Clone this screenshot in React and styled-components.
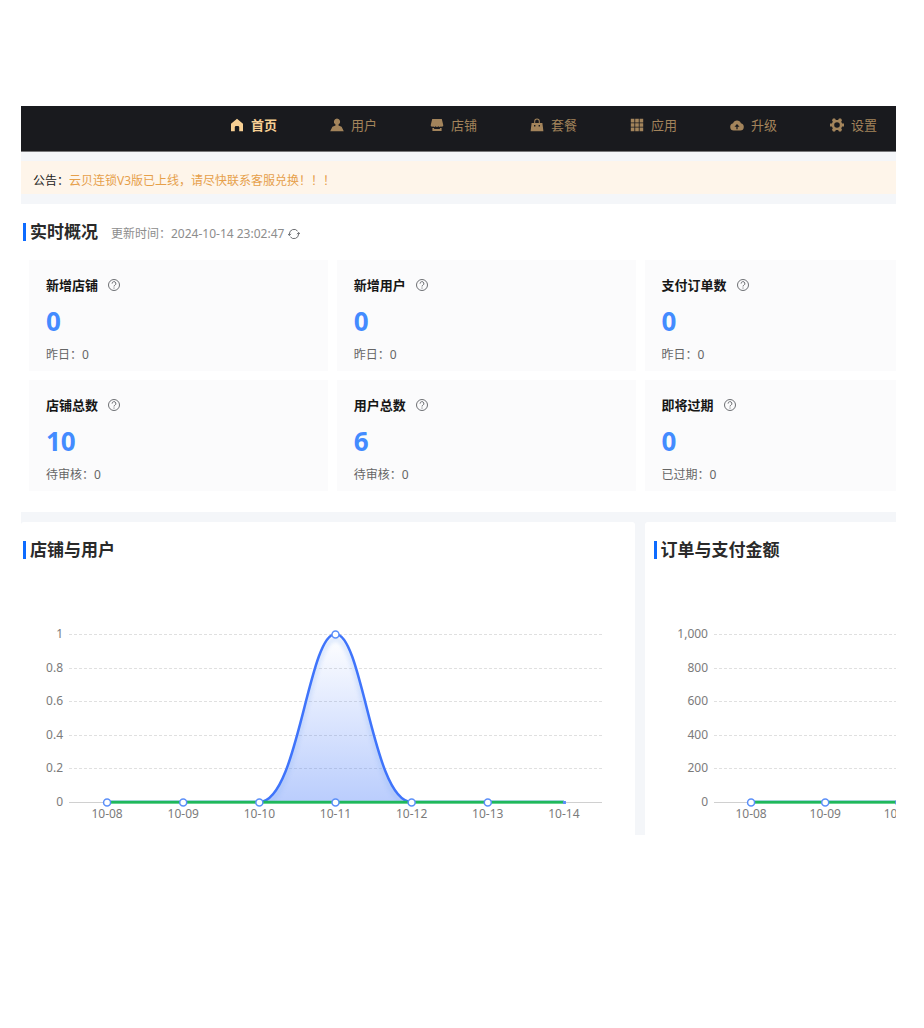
import React, { useId, useLayoutEffect, useRef, useState } from "react";
import styled, { createGlobalStyle } from "styled-components";

const GlobalStyle = createGlobalStyle`
  *, *::before, *::after { box-sizing: border-box; }
  body {
    margin: 0;
    background: #fff;
    color: #222;
    font: 12px/20px "Noto Sans", "Noto Sans CJK SC", sans-serif;
  }
`;

const Frame = styled.div`
  margin: 106px 28px 0 21px;
  overflow: hidden;
  background: #f4f6f9;
`;

const Nav = styled.nav`
  display: flex;
  height: 46px;
  padding: 9px 0 0 209px;
  background: #191a1e;
  border-bottom: 1px solid #77787b;
`;

const NavLink = styled.a`
  flex: 0 0 100px;
  display: flex;
  align-items: center;
  gap: 7px;
  height: 20px;
  font-size: 13px;
  text-decoration: none;
  white-space: nowrap;
  color: ${(p) => (p.$active ? "#f7cf93" : "#a3845b")};
  font-weight: ${(p) => (p.$active ? 700 : 400)};
`;

const NavIcon = styled.svg`
  flex: none;
  width: 14px;
  height: 14px;
  fill: currentColor;
`;

const Notice = styled.div`
  display: flex;
  align-items: center;
  height: 33px;
  margin: 9px 0 10px;
  padding: 7px 12px 0;
  background: #fef5ea;
  white-space: nowrap;
`;

const NoticeLink = styled.a`
  color: #e6a04a;
  text-decoration: none;
`;

const Overview = styled.section`
  height: 308px;
  padding: 18px 0 0 2px;
  background: #fff;
`;

const TitleRow = styled.div`
  display: flex;
  align-items: center;
  gap: 13px;
  height: 20px;
`;

const Title = styled.h2`
  display: flex;
  align-items: center;
  gap: 4px;
  margin: 0;
  font-size: 17px;
  line-height: 20px;
  color: #2a2a2a;
  white-space: nowrap;

  &::before {
    content: "";
    width: 3px;
    height: 18px;
    background: #0d6bff;
  }
`;

const Updated = styled.div`
  display: flex;
  align-items: center;
  gap: 4px;
  padding-top: 4px;
  color: #8d8d8d;
  white-space: nowrap;
`;

const IconButton = styled.button`
  display: flex;
  padding: 0;
  border: 0;
  background: none;
  color: #6d6f73;
  cursor: pointer;

  svg {
    width: ${(p) => p.$size}px;
    height: ${(p) => p.$size}px;
    fill: none;
    stroke: currentColor;
  }
`;

const Cards = styled.div`
  display: grid;
  grid-template-columns: repeat(3, calc(34% + 4px));
  gap: 9px;
  margin: 18px 0 0 6px;
`;

const Card = styled.article`
  height: 111px;
  padding: 15px 17px;
  background: #fbfbfc;
`;

const CardHead = styled.div`
  display: flex;
  align-items: center;
  gap: 10px;
`;

const CardTitle = styled.h3`
  margin: 0;
  font-size: 13px;
  line-height: 20px;
  font-weight: 600;
  color: #161616;
`;

const Value = styled.div`
  margin: 9px 0 8px;
  font-size: 26px;
  line-height: 34px;
  font-weight: 700;
  color: #438bff;
`;

const Sub = styled.div`
  line-height: 18px;
  color: #666;
`;

const Charts = styled.div`
  display: grid;
  grid-template-columns: calc(70% + 1px) 71%;
  gap: 10px;
  margin-top: 10px;
`;

const Panel = styled.section`
  height: 313px;
  padding-top: 18px;
  background: #fff;
  border-radius: 3px 3px 0 0;

  h2 { padding-left: ${(p) => p.$inset}px; }
`;

const Plot = styled.div`
  height: 255px;
  margin-top: 20px;

  svg { display: block; overflow: hidden; }
  text { font-size: 12px; fill: #7b7b7b; }
`;

const GLYPHS = {
  home: <path d="M7 .8 1 5.800v7.400h3.800V9.300A1.300 1.300 0 0 1 6.100 8h1.800a1.300 1.300 0 0 1 1.300 1.300v3.900H13V5.800z" />,
  user: <path d="M7 .6a3.200 3.200 0 0 1 1.500 6v.9l3.100 1.300 2.200 4.400H.2l2.200-4.400 3.100-1.300v-.9A3.200 3.200 0 0 1 7 .6z" />,
  shop: <path d="M2.200 1h9.600l1.500 6.300c0 1.300-1.500 1.900-2.300.9-.6.900-1.900.900-2.600 0-.7.900-2.100.9-2.800 0-.7.9-2 .9-2.600 0-.8 1-2.300.4-2.300-.9zM2.400 10h1.700v1h5.800v-1h1.700v3H2.400z" />,
  bag: <path fillRule="evenodd" d="M4.200 5V3.400a2.800 2.800 0 0 1 5.600 0V5h2.600l1 8.200H.6L1.600 5zm1-.1h3.600V3.400a1.800 1.800 0 0 0-3.600 0zM4 7v1.400h1.400V7zm4.600 0v1.400H10V7z" />,
  grid: (
    <path d="M.8.8h3.600v3.600H.8zM5.200.8h3.600v3.600H5.200zM9.600.8h3.600v3.600H9.600zM.8 5.200h3.600v3.600H.8zM5.200 5.200h3.600v3.600H5.200zM9.600 5.200h3.600v3.600H9.600zM.8 9.600h3.600v3.600H.8zM5.200 9.600h3.600v3.600H5.200zM9.600 9.600h3.600v3.600H9.600z" />
  ),
  cloud: <path fillRule="evenodd" d="M3.100 5.300a4.100 4.100 0 0 1 7.800 0A3.700 3.700 0 0 1 10.300 12.600H3.700A3.700 3.700 0 0 1 3.100 5.300zM7 6 4.500 8.700h1.900v2.500h1.200V8.700h1.900z" />,
  gear: <path fillRule="evenodd" d="M3 .5h2L5.900 1.900h2.200L9 .5h2l1 1.800-.8 1.400 1 1.900h1.800v2.800h-1.800l-1 1.900.8 1.400L11 13.500H9l-.9-1.400H5.900L5 13.500H3l-1-1.800.8-1.400-1-1.900H0V5.600h1.800l1-1.900L2 2.300zM7 4.200a2.800 2.800 0 1 0 0 5.600 2.800 2.800 0 0 0 0-5.600z" />,
};

const NAV = [
  ["home", "首页"],
  ["user", "用户"],
  ["shop", "店铺"],
  ["bag", "套餐"],
  ["grid", "应用"],
  ["cloud", "升级"],
  ["gear", "设置"],
];

const STATS = [
  ["新增店铺", 0, "昨日", 0],
  ["新增用户", 0, "昨日", 0],
  ["支付订单数", 0, "昨日", 0],
  ["店铺总数", 10, "待审核", 0],
  ["用户总数", 6, "待审核", 0],
  ["即将过期", 0, "已过期", 0],
];

const DAYS = ["10-08", "10-09", "10-10", "10-11", "10-12", "10-13", "10-14"];

function HelpIcon() {
  return (
    <svg viewBox="0 0 12 12" aria-hidden="true">
      <circle cx="6" cy="6" r="5.500" />
      <path d="M4.100 4.600a1.900 1.900 0 1 1 2.800 1.600c-.7.400-.9.600-.9 1.300M6 8.500v1.100" />
    </svg>
  );
}

function RefreshIcon() {
  return (
    <svg viewBox="0 0 12 12" aria-hidden="true">
      <path d="M1.400 7.500V6a4.600 4.600 0 0 1 8.200-2.900M10.600 4.500V6a4.600 4.600 0 0 1-8.200 2.900M0 5.800l1.400 1.700L3 5.800M9 6.200l1.600-1.700L12 6.200" />
    </svg>
  );
}

const SMOOTH = 0.36;

function smoothPath(points) {
  const [first, ...rest] = points;
  const length = (a, b) => Math.hypot(b[0] - a[0], b[1] - a[1]);
  let d = `M${first[0]} ${first[1]}`;
  rest.forEach((to, i) => {
    const from = points[i];
    const before = points[i - 1] || from;
    const after = points[i + 2] || to;
    const seg = length(from, to);
    const out = (to[0] - before[0]) * SMOOTH * (seg / (seg + length(before, from)));
    const back = (after[0] - from[0]) * SMOOTH * (seg / (seg + length(to, after)));
    d += `C${from[0] + out} ${from[1]} ${to[0] - back} ${to[1]} ${to[0]} ${to[1]}`;
  });
  return d;
}

function LineChart({ label, ticks, left, values }) {
  const box = useRef(null);
  const [width, setWidth] = useState(0);
  const id = useId();

  useLayoutEffect(() => {
    const measure = () => setWidth(Math.floor(box.current.clientWidth));
    measure();
    const observer = new ResizeObserver(measure);
    observer.observe(box.current);
    return () => observer.disconnect();
  }, []);

  const top = 54;
  const bottom = 222;
  const right = width - 33;
  const band = (right - left) / DAYS.length;
  const x = (i) => left + band * (i + 0.5);
  const y = (v) => bottom - v * (bottom - top);
  const points = values.map((v, i) => [x(i), y(v)]);
  const curve = smoothPath(points);
  const area = `${curve}L${x(DAYS.length - 1)} ${bottom}L${x(0)} ${bottom}Z`;

  return (
    <Plot ref={box}>
      {width > 0 && (
        <svg width={width} height="255" role="img" aria-label={label}>
          <defs>
            <linearGradient id={`${id}fill`} x1="0" y1="0" x2="0" y2="1">
              <stop offset="0" stopColor="#3f74f9" stopOpacity="0" />
              <stop offset="1" stopColor="#3f74f9" stopOpacity=".36" />
            </linearGradient>
            <filter id={`${id}glow`} x="-10%" y="-10%" width="120%" height="130%">
              <feGaussianBlur stdDeviation="2" />
            </filter>
            <clipPath id={`${id}clip`}>
              <path d={area} />
            </clipPath>
          </defs>
          {ticks.map((t, i) => {
            const ty = Math.round(top + ((bottom - top) * i) / (ticks.length - 1));
            const last = i === ticks.length - 1;
            return (
              <g key={t}>
                <line
                  x1={left}
                  x2={right}
                  y1={ty + 0.5}
                  y2={ty + 0.5}
                  stroke={last ? "#d0d0d0" : "#e0e0e0"}
                  strokeDasharray={last ? undefined : "3 2"}
                />
                <text x={left - 6} y={ty + 4} textAnchor="end">{t}</text>
              </g>
            );
          })}
          <path d={area} fill={`url(#${id}fill)`} />
          <g clipPath={`url(#${id}clip)`}>
            <path d={curve} transform="translate(0 5)" fill="none" stroke="#8ab4f5" strokeWidth="4" opacity=".35" filter={`url(#${id}glow)`} />
          </g>
          <path d={curve} fill="none" stroke="#3f74fb" strokeWidth="2.5" />
          <line x1={x(0)} x2={x(6)} y1={bottom + 1} y2={bottom + 1} stroke="#83d9a3" strokeWidth="2" />
          <line x1={x(0)} x2={x(6)} y1={bottom} y2={bottom} stroke="#1fb85c" strokeWidth="2.500" />
          {points.slice(0, -1).map(([px, py], i) => (
            <g key={DAYS[i]} fill="#fff" stroke="#5b8ff9" strokeWidth="1.500">
              <circle cx={px} cy={bottom + 0.5} r="3.500" />
              {py < bottom && <circle cx={px} cy={py + 0.5} r="3.500" />}
            </g>
          ))}
          <rect x={x(6) - 1} y={bottom - 1} width="3" height="3" fill="#5b8ff9" />
          {DAYS.map((day, i) => (
            <text key={day} x={x(i)} y="238" textAnchor="middle">{day}</text>
          ))}
        </svg>
      )}
    </Plot>
  );
}

export default function App() {
  return (
    <>
      <GlobalStyle />
      <Frame>
        <Nav>
          {NAV.map(([icon, text], i) => (
            <NavLink key={icon} href={`#${icon}`} $active={i === 0}>
              <NavIcon viewBox="0 0 14 14" aria-hidden="true">{GLYPHS[icon]}</NavIcon>
              {text}
            </NavLink>
          ))}
        </Nav>
        <Notice>
          公告：
          <NoticeLink href="#notice">云贝连锁V3版已上线，请尽快联系客服兑换！！！</NoticeLink>
        </Notice>
        <Overview>
          <TitleRow>
            <Title>实时概况</Title>
            <Updated>
              <span>更新时间：2024-10-14 23:02:47</span>
              <IconButton type="button" aria-label="刷新" $size={12}>
                <RefreshIcon />
              </IconButton>
            </Updated>
          </TitleRow>
          <Cards>
            {STATS.map(([title, value, sub, count]) => (
              <Card key={title}>
                <CardHead>
                  <CardTitle>{title}</CardTitle>
                  <IconButton type="button" aria-label={`${title}说明`} $size={12}>
                    <HelpIcon />
                  </IconButton>
                </CardHead>
                <Value>{value}</Value>
                <Sub>{sub}：{count}</Sub>
              </Card>
            ))}
          </Cards>
        </Overview>
        <Charts>
          <Panel $inset={2}>
            <Title>店铺与用户</Title>
            <LineChart label="店铺与用户" left={48} ticks={["1", "0.8", "0.6", "0.4", "0.2", "0"]} values={[0, 0, 0, 1, 0, 0, 0]} />
          </Panel>
          <Panel $inset={9}>
            <Title>订单与支付金额</Title>
            <LineChart label="订单与支付金额" left={69} ticks={["1,000", "800", "600", "400", "200", "0"]} values={[0, 0, 0, 0, 0, 0, 0]} />
          </Panel>
        </Charts>
      </Frame>
    </>
  );
}
